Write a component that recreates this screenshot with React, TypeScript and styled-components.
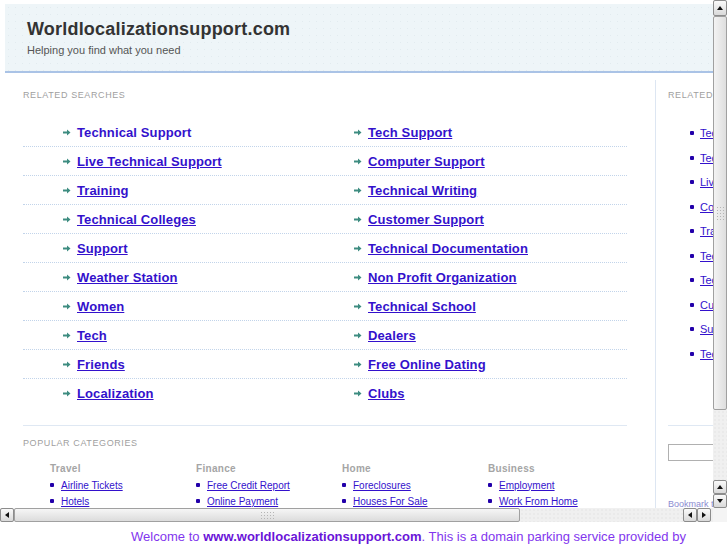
import React from "react";
import styled, { createGlobalStyle } from "styled-components";

const Global = createGlobalStyle`
  html, body { margin: 0; padding: 0; background: #fff; overflow: hidden; }
  body { font-family: "Liberation Sans", Arial, sans-serif; }
  * { box-sizing: border-box; }
`;

const Frame = styled.div`
  width: 727px;
  height: 522px;
  display: grid;
  grid-template-columns: 713px 14px;
  grid-template-rows: 508px 14px;
`;

const Viewport = styled.div`
  overflow: hidden;
  background: #fff;
`;

const Page = styled.div`
  width: 900px;
  padding: 4px 0 0 5px;
`;

const Header = styled.div`
  height: 69px;
  padding: 14px 22px 0;
  background-color: #eef5f8;
  background-image: radial-gradient(#e2ebef 0.6px, transparent 0.8px);
  background-size: 7px 7px;
  border-bottom: 2px solid #aac3e6;
`;

const Title = styled.div`
  font-size: 18px;
  line-height: 22px;
  font-weight: bold;
  letter-spacing: 0.2px;
  color: #333;
`;

const Tagline = styled.div`
  margin-top: 3px;
  font-size: 11px;
  line-height: 14px;
  color: #555;
`;

const Main = styled.div`
  display: flex;
  padding-top: 7px;
`;

const LeftCol = styled.div`
  width: 650px;
  flex: none;
  padding: 9px 0 0 18px;
`;

const SectionLabel = styled.div`
  font-size: 9px;
  line-height: 12px;
  letter-spacing: 0.6px;
  color: #a0a0a0;
  text-transform: uppercase;
`;

const Searches = styled.div`
  width: 604px;
  margin-top: 17px;
  padding-bottom: 17px;
  border-bottom: 1px solid #dfe8f3;
`;

const SearchRow = styled.div<{ $last?: boolean }>`
  height: 29px;
  display: grid;
  grid-template-columns: 291px 291px;
  padding-left: 40px;
  align-items: center;
  border-bottom: ${(p) => (p.$last ? "none" : "1px dotted #c2d4ea")};
`;

const SearchItem = styled.div`
  display: flex;
  align-items: center;
  gap: 6px;
`;

const SearchLink = styled.a<{ $plain?: boolean }>`
  font-size: 13px;
  font-weight: bold;
  letter-spacing: 0.12px;
  color: #3311cc;
  text-decoration: ${(p) => (p.$plain ? "none" : "underline")};
  cursor: pointer;
`;

const Categories = styled.div`
  margin-top: 11px;
`;

const CatGrid = styled.div`
  margin-top: 13px;
  padding-left: 27px;
  display: grid;
  grid-template-columns: repeat(4, 146px);
`;

const CatHead = styled.div`
  font-size: 10px;
  line-height: 14px;
  font-weight: bold;
  color: #a5a5a5;
  letter-spacing: 0.3px;
`;

const CatList = styled.ul`
  list-style: none;
  margin: 1px 0 0;
  padding: 0;
`;

const CatItem = styled.li`
  display: flex;
  align-items: center;
  gap: 7px;
  height: 16px;
`;

const Dot = styled.span`
  width: 4px;
  height: 4px;
  border-radius: 1px;
  background: #2200aa;
  flex: none;
`;

const SmallLink = styled.a`
  font-size: 10px;
  color: #3311cc;
  text-decoration: underline;
  white-space: nowrap;
  cursor: pointer;
`;

const Sidebar = styled.div`
  flex: 1;
  border-left: 1px solid #dde6f2;
  padding: 9px 0 0 12px;
  min-height: 440px;
`;

const SideList = styled.ul`
  list-style: none;
  margin: 20px 0 0;
  padding: 0 0 0 22px;
`;

const SideItem = styled.li`
  display: flex;
  align-items: center;
  gap: 6px;
  height: 24.5px;
`;

const SideLink = styled.a`
  font-size: 11px;
  color: #3311cc;
  text-decoration: underline;
  cursor: pointer;
`;

const SideRule = styled.div`
  margin-top: 59px;
  width: 200px;
  border-top: 1px solid #dfe8f3;
`;

const SearchBox = styled.input`
  display: block;
  margin-top: 18px;
  width: 120px;
  height: 17px;
  border: 1px solid #b0b0b0;
  padding: 0;
`;

const Bookmark = styled.div`
  margin-top: 38px;
  font-size: 9px;
  color: #8b8bd0;
`;

/* scrollbars */

const VBar = styled.div`
  display: flex;
  flex-direction: column;
  background: #efefef;
`;

const HBar = styled.div`
  display: flex;
  background: #efefef;
`;

const Corner = styled.div`
  background: #f4f4f4;
`;

const Btn = styled.div<{ $h?: number; $w?: number }>`
  width: ${(p) => p.$w ?? 14}px;
  height: ${(p) => p.$h ?? 14}px;
  flex: none;
  display: flex;
  align-items: center;
  justify-content: center;
  background: linear-gradient(#fafafa, #d9d9d9);
  border: 1px solid #8c8c8c;
  border-radius: 2px;
`;

const Tri = styled.span<{ $dir: "up" | "down" | "left" | "right" }>`
  width: 0;
  height: 0;
  border: 3px solid transparent;
  ${(p) =>
    p.$dir === "up"
      ? "border-bottom: 4px solid #111; border-top-width: 0; margin-top: -1px;"
      : p.$dir === "down"
      ? "border-top: 4px solid #111; border-bottom-width: 0;"
      : p.$dir === "left"
      ? "border-right: 4px solid #111; border-left-width: 0;"
      : "border-left: 4px solid #111; border-right-width: 0;"}
`;

const VThumb = styled.div`
  height: 394px;
  flex: none;
  display: flex;
  align-items: center;
  justify-content: center;
  background: linear-gradient(to right, #f3f3f3, #dedede);
  border: 1px solid #a0a0a0;
  border-radius: 2px;
`;

const HThumb = styled.div`
  width: 506px;
  flex: none;
  display: flex;
  align-items: center;
  justify-content: center;
  background: linear-gradient(#f6f6f6, #dcdcdc);
  border: 1px solid #a0a0a0;
  border-radius: 2px;
`;

const Grip = styled.div<{ $w: number; $h: number }>`
  width: ${(p) => p.$w}px;
  height: ${(p) => p.$h}px;
  background-image: radial-gradient(#b5b5b5 0.8px, transparent 1px);
  background-size: 3px 3px;
`;

const Track = styled.div`
  flex: 1;
  background-color: #f0f0f0;
  background-image: radial-gradient(#e2e2e2 0.6px, transparent 0.8px);
  background-size: 4px 4px;
`;

const Gap = styled.div`
  width: 2px;
  flex: none;
`;

const Footer = styled.div`
  padding: 7px 0 0 131px;
  font-size: 13px;
  line-height: 16px;
  letter-spacing: 0.02px;
  color: #8236ee;
  white-space: nowrap;
`;

const Strong = styled.b`
  font-weight: bold;
  color: #6a14d8;
`;

const Arrow = () => (
  <svg width="8" height="7" viewBox="0 0 8 7">
    <path d="M0 2.5h4V0.5L7.5 3.5 4 6.5V4.5H0z" fill="#3d8c80" />
  </svg>
);

const left = [
  "Technical Support",
  "Live Technical Support",
  "Training",
  "Technical Colleges",
  "Support",
  "Weather Station",
  "Women",
  "Tech",
  "Friends",
  "Localization",
];
const right = [
  "Tech Support",
  "Computer Support",
  "Technical Writing",
  "Customer Support",
  "Technical Documentation",
  "Non Profit Organization",
  "Technical School",
  "Dealers",
  "Free Online Dating",
  "Clubs",
];

const cats = [
  { name: "Travel", items: ["Airline Tickets", "Hotels"] },
  { name: "Finance", items: ["Free Credit Report", "Online Payment"] },
  { name: "Home", items: ["Foreclosures", "Houses For Sale"] },
  { name: "Business", items: ["Employment", "Work From Home"] },
];

const side = [
  "Tech Support",
  "Technical Support",
  "Live Technical Support",
  "Computer Support",
  "Training",
  "Technical Writing",
  "Technical Colleges",
  "Customer Support",
  "Support",
  "Technical Documentation",
];

export default function App() {
  return (
    <>
      <Global />
      <Frame>
        <Viewport>
          <Page>
            <Header>
              <Title>Worldlocalizationsupport.com</Title>
              <Tagline>Helping you find what you need</Tagline>
            </Header>
            <Main>
              <LeftCol>
                <SectionLabel>Related Searches</SectionLabel>
                <Searches>
                  {left.map((l, i) => (
                    <SearchRow key={l} $last={i === left.length - 1}>
                      <SearchItem>
                        <Arrow />
                        <SearchLink $plain={i === 0}>{l}</SearchLink>
                      </SearchItem>
                      <SearchItem>
                        <Arrow />
                        <SearchLink>{right[i]}</SearchLink>
                      </SearchItem>
                    </SearchRow>
                  ))}
                </Searches>
                <Categories>
                  <SectionLabel>Popular Categories</SectionLabel>
                  <CatGrid>
                    {cats.map((c) => (
                      <div key={c.name}>
                        <CatHead>{c.name}</CatHead>
                        <CatList>
                          {c.items.map((it) => (
                            <CatItem key={it}>
                              <Dot />
                              <SmallLink>{it}</SmallLink>
                            </CatItem>
                          ))}
                        </CatList>
                      </div>
                    ))}
                  </CatGrid>
                </Categories>
              </LeftCol>
              <Sidebar>
                <SectionLabel>Related Searches</SectionLabel>
                <SideList>
                  {side.map((s) => (
                    <SideItem key={s}>
                      <Dot />
                      <SideLink>{s}</SideLink>
                    </SideItem>
                  ))}
                </SideList>
                <SideRule />
                <SearchBox />
                <Bookmark>Bookmark this page</Bookmark>
              </Sidebar>
            </Main>
          </Page>
        </Viewport>
        <VBar>
          <Btn $h={16}>
            <Tri $dir="up" />
          </Btn>
          <VThumb>
            <Grip $w={9} $h={15} />
          </VThumb>
          <Track />
          <Btn>
            <Tri $dir="up" />
          </Btn>
          <Btn>
            <Tri $dir="down" />
          </Btn>
        </VBar>
        <HBar>
          <Btn>
            <Tri $dir="left" />
          </Btn>
          <HThumb>
            <Grip $w={15} $h={9} />
          </HThumb>
          <Track />
          <Btn>
            <Tri $dir="left" />
          </Btn>
          <Btn>
            <Tri $dir="right" />
          </Btn>
          <Gap />
        </HBar>
        <Corner />
      </Frame>
      <Footer>
        Welcome to <Strong>www.worldlocalizationsupport.com</Strong>. This is a domain parking service provided by
      </Footer>
    </>
  );
}
